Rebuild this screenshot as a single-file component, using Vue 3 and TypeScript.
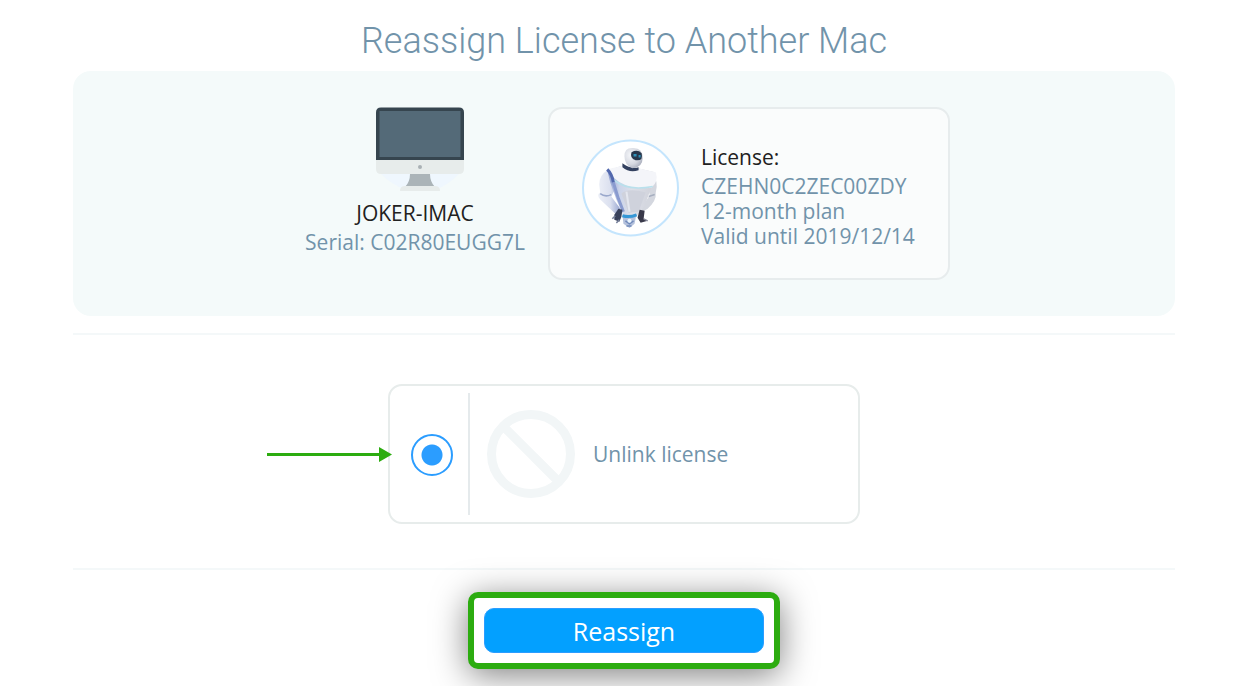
<script setup lang="ts">
import { ref } from 'vue'

interface License {
  key: string
  plan: string
  validUntil: string
}

const computer = { name: 'JOKER-IMAC', serial: 'C02R80EUGG7L' }
const license: License = { key: 'CZEHN0C2ZEC00ZDY', plan: '12-month plan', validUntil: '2019/12/14' }
const target = ref<string>('unlink')
</script>

<template>
  <main class="page">
    <h1 class="title">Reassign License to Another Mac</h1>

    <section class="summary">
      <div class="computer">
        <svg class="mac-icon" viewBox="0 0 88 86" aria-hidden="true">
          <path d="M4 66 H84 Q70 80 58 83 H30 Q16 78 4 66Z" fill="#eff7fe" />
          <path d="M5 0.5 H83 Q88 0.5 88 5.5 V53 H0 V5.5 Q0 0.5 5 0.5Z" fill="#36454f" />
          <rect x="3.5" y="4" width="81" height="46" fill="#546a78" />
          <path d="M0 53 H88 V62 Q88 67 83 67 H5 Q0 67 0 62Z" fill="#e7eceb" />
          <circle cx="44" cy="60" r="2" fill="#a9b1b5" />
          <path d="M34 67 H54 Q54 75 59 80 H29 Q34 75 34 67Z" fill="#abb4b8" />
          <path d="M29 79 H59 Q64 79 64 84 H24 Q24 79 29 79Z" fill="#e7eceb" />
        </svg>
        <div class="name">{{ computer.name }}</div>
        <div class="muted">Serial: {{ computer.serial }}</div>
      </div>

      <div class="license">
        <svg class="avatar" viewBox="0 0 96 97" aria-hidden="true">
          <defs>
            <linearGradient id="torso" x1="0" y1="0" x2="1" y2="0">
              <stop offset="0" stop-color="#8798cd" />
              <stop offset="0.25" stop-color="#cbd4ea" />
              <stop offset="0.5" stop-color="#dcdfe8" />
              <stop offset="1" stop-color="#cfd1d9" />
            </linearGradient>
            <linearGradient id="arm" x1="0" y1="0" x2="1" y2="0">
              <stop offset="0" stop-color="#eceff7" />
              <stop offset="0.55" stop-color="#dbe0ef" />
              <stop offset="1" stop-color="#97a5d0" />
            </linearGradient>
            <radialGradient id="skull" cx="0.35" cy="0.35" r="0.75">
              <stop offset="0" stop-color="#f6f7fa" />
              <stop offset="0.6" stop-color="#d6d9e1" />
              <stop offset="1" stop-color="#a4a9b8" />
            </radialGradient>
          </defs>
          <circle cx="48" cy="48.5" r="47" fill="#fff" stroke="#c4e5fd" stroke-width="2" />
          <path d="M25 31 Q17 36 17 45 L18 53 Q14 55 18 60 L33 74 L38 69 L29 57 L34 47Z" fill="url(#arm)" />
          <path d="M18 54 Q23 58 29 55" fill="none" stroke="#9aa8cc" stroke-width="1.5" />
          <path d="M70 35 Q76 42 73 53 Q74 61 65 69 L58 73 L60 66 L67 56 L65 44Z" fill="#d4d7df" />
          <path d="M66 57 L72 55" stroke="#a7afc0" stroke-width="1.5" />
          <path d="M25 31 Q33 29 41 26 Q56 29 72 33 Q75 38 69 47 L62 66 L54 77 L41 76 L34 60 L28 43Z" fill="url(#torso)" />
          <path d="M25 30 Q34 28 42 26 Q56 29 73 33 Q76 42 69 48 Q45 51 31 38Z" fill="#f4f5f9" />
          <path d="M31 40 Q44 52 70 47" fill="none" stroke="#b9e0ec" stroke-width="1.5" />
          <path d="M25 30 Q30 35 31 43" fill="none" stroke="#5268ad" stroke-width="3" />
          <path d="M31 43 L36 59 L41 72" fill="none" stroke="#8a9bcf" stroke-width="3" />
          <path d="M39 54 Q46 48 63 53 L56 72 L46 73Z" fill="#cfd2dc" />
          <path d="M44 52 L47 72" stroke="#e4e7ef" stroke-width="2" />
          <path d="M40 24 Q48 30 56 28 L56 31 Q47 34 40 28Z" fill="#33415f" />
          <path d="M42 17 Q42 8 51 9 Q60 9 60 19 Q60 28 50 29 Q42 26 42 17Z" fill="url(#skull)" />
          <path d="M49 13 Q55 10 59 14 Q61 22 53 21 Q47 19 49 13Z" fill="#28384d" />
          <path d="M51 16 L54 16 M56 17 L58 17" stroke="#2f91b9" stroke-width="2.5" />
          <path d="M36 69 L40 70 L39 77 L37 82 L32 80 L32 75Z" fill="#39425c" />
          <path d="M33 76 L30 79 M37 80 L34 83" stroke="#747e98" stroke-width="1.5" />
          <path d="M57 70 L62 71 L61 79 L65 81 L58 83 L55 78Z" fill="#39394a" />
          <path d="M61 79 L65 81" stroke="#87899a" stroke-width="1.5" />
          <path d="M40 75 Q48 78 54 74 L52 84 L47 88 L41 84Z" fill="#b4c1dc" />
          <path d="M40 76 Q47 78 54 75" fill="none" stroke="#3597d6" stroke-width="3" />
          <path d="M43 81 L47 84 L51 81 M44 86 L49 86" fill="none" stroke="#708abb" stroke-width="1.5" />
          <circle cx="47" cy="81" r="2" fill="#ecf7ff" />
        </svg>
        <div class="details">
          <div class="label">License:</div>
          <div class="muted">{{ license.key }}</div>
          <div class="muted">{{ license.plan }}</div>
          <div class="muted">Valid until {{ license.validUntil }}</div>
        </div>
      </div>
    </section>

    <section class="choices">
      <div class="choice-wrap">
        <svg class="arrow" viewBox="0 0 125 15" aria-hidden="true">
          <path d="M0 6 H112 V0 L125 7.5 L112 15 V9 H0Z" fill="#2cac10" />
        </svg>
        <label class="choice" for="unlink">
          <span class="radio-cell">
            <input id="unlink" v-model="target" class="radio" type="radio" name="target" value="unlink" />
          </span>
          <svg class="ban-icon" viewBox="0 0 88 88" aria-hidden="true">
            <g fill="none" stroke="#f2f6f7" stroke-width="9">
              <circle cx="44" cy="44" r="39.5" />
              <path d="M17 17 L71 71" />
            </g>
          </svg>
          <span class="muted">Unlink license</span>
        </label>
      </div>
    </section>

    <footer class="actions">
      <div class="highlight">
        <button class="submit" type="button">Reassign</button>
      </div>
    </footer>
  </main>
</template>

<style>
body {
  margin: 0;
  background: #fff;
}
</style>

<style scoped>
.page {
  box-sizing: border-box;
  padding: 0 75px 0 73px;
  font: 21px/25px "Open Sans", "Noto Sans", sans-serif;
  color: #212121;
}
.title {
  margin: 0;
  padding: 17px 0 6px;
  text-align: center;
  font: 300 36px/48px Roboto, "Liberation Sans", sans-serif;
  color: #7193aa;
}
.summary {
  display: flex;
  justify-content: center;
  align-items: flex-start;
  gap: 16px;
  box-sizing: border-box;
  padding: 36px 0;
  border-radius: 18px;
  background: #f4fafa;
}
.computer {
  display: flex;
  flex-direction: column;
  align-items: center;
  width: 234px;
}
.mac-icon {
  width: 88px;
  height: 86px;
  margin: 0 0 8px 10px;
}
.name,
.label {
  margin-bottom: 4px;
}
.muted {
  color: #7193aa;
}
.license {
  display: flex;
  gap: 22px;
  box-sizing: border-box;
  width: 402px;
  padding: 30px 32px 29px;
  border: 2px solid #e7eced;
  border-radius: 14px;
  background: #fafcfc;
}
.avatar {
  flex: none;
  width: 97px;
  height: 98px;
}
.details {
  padding-top: 6px;
  white-space: nowrap;
}
.choices {
  display: flex;
  justify-content: center;
  margin-top: 17px;
  padding: 49px 0 44px;
  border-top: 2px solid #f4f8f9;
  border-bottom: 2px solid #f4f8f9;
}
.choice-wrap {
  position: relative;
}
.arrow {
  position: absolute;
  top: 63px;
  left: -121px;
  width: 125px;
  height: 15px;
}
.choice {
  display: flex;
  align-items: center;
  box-sizing: border-box;
  width: 472px;
  height: 140px;
  padding: 7px 0;
  border: 2px solid #e7eceb;
  border-radius: 14px;
}
.radio-cell {
  display: flex;
  align-items: center;
  justify-content: center;
  align-self: stretch;
  box-sizing: border-box;
  width: 80px;
  padding-left: 6px;
  border-right: 2px solid #e5eaec;
}
.radio {
  appearance: none;
  box-sizing: border-box;
  width: 42px;
  height: 42px;
  margin: 2px 0 0;
  border: 2px solid #2b9dff;
  border-radius: 50%;
  background: radial-gradient(circle, #2b9dff 10px, transparent 11px);
}
.ban-icon {
  width: 88px;
  height: 88px;
  margin: 0 18px 0 17px;
}
.actions {
  display: flex;
  justify-content: center;
  padding: 22px 0 17px;
}
.highlight {
  padding: 10px;
  border: 6px solid #2cac10;
  border-radius: 10px;
  background: #fff;
  box-shadow: 0 6px 34px rgba(0, 0, 0, 0.5);
}
.submit {
  display: block;
  width: 280px;
  height: 45px;
  padding: 0;
  border: 1px solid #2b9dff;
  border-radius: 10px;
  background: #03a0ff;
  color: #fff;
  font: 25px/40px "Open Sans", "Noto Sans", sans-serif;
}
</style>
